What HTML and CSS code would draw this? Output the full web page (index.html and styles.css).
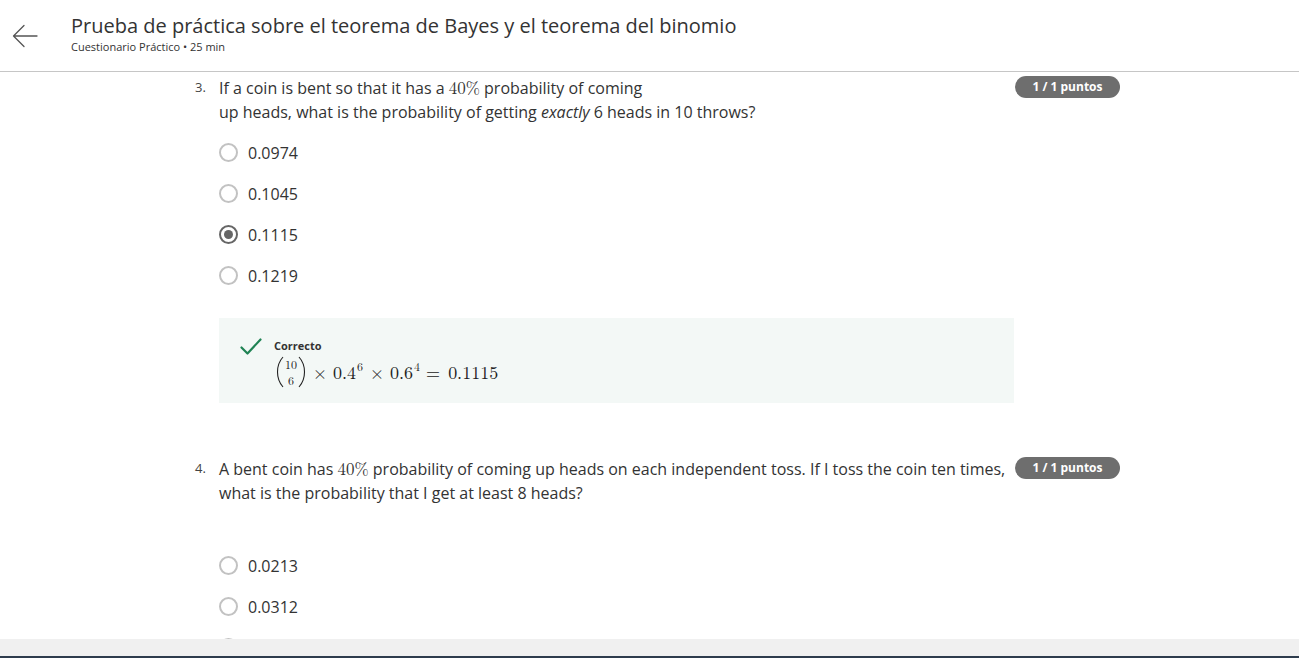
FILE: index.html
```html
<!DOCTYPE html>
<html lang="es">
<head>
<meta charset="utf-8">
<title>Prueba de práctica</title>
<link rel="stylesheet" href="styles.css">
</head>
<body>
<header class="topbar">
  <button class="back" aria-label="Atrás">
    <svg width="26" height="24" viewBox="0 0 26 24" fill="none" stroke="#555" stroke-width="1.3" stroke-linecap="round" stroke-linejoin="round"><path d="M25 12H1.5M12 1.5L1.5 12L12 22.5"/></svg>
  </button>
  <div class="titles">
    <h1 class="title">Prueba de práctica sobre el teorema de Bayes y el teorema del binomio</h1>
    <div class="subtitle">Cuestionario Práctico • 25 min</div>
  </div>
</header>

<main class="content">
  <section class="question">
    <div class="qrow">
      <span class="qnum">3.</span>
      <p class="qtext">If a coin is bent so that it has a <span class="m">40%</span> probability of coming<br>up heads, what is the probability of getting <em>exactly</em> 6 heads in 10 throws?</p>
      <span class="badge">1 / 1 puntos</span>
    </div>
    <ul class="options">
      <li class="opt"><span class="radio"></span>0.0974</li>
      <li class="opt"><span class="radio"></span>0.1045</li>
      <li class="opt"><span class="radio checked"></span>0.1115</li>
      <li class="opt"><span class="radio"></span>0.1219</li>
    </ul>
    <div class="feedback">
      <svg class="check" width="22" height="18" viewBox="0 0 22 18" fill="none" stroke="#1f8354" stroke-width="2.2" stroke-linecap="round" stroke-linejoin="round"><path d="M1.5 9.5L7.5 15.5L20.5 1.5"/></svg>
      <div class="fbody">
        <div class="fhead">Correcto</div>
        <div class="formula">
          <span class="binom">
            <svg class="paren" width="8" height="32" viewBox="0 0 8 32" fill="none" stroke="#222" stroke-width="1.1"><path d="M7 1C2.5 6 1.5 11 1.5 16S2.5 26 7 31"/></svg>
            <span class="stack"><span>10</span><span>6</span></span>
            <svg class="paren" width="8" height="32" viewBox="0 0 8 32" fill="none" stroke="#222" stroke-width="1.1"><path d="M1 1C5.5 6 6.5 11 6.5 16S5.5 26 1 31"/></svg>
          </span><span class="op">×</span><span>0.4</span><span class="sup">6</span><span class="op">×</span><span>0.6</span><span class="sup">4</span><span class="op eq">=</span><span>0.1115</span>
        </div>
      </div>
    </div>
  </section>

  <section class="question q4">
    <div class="qrow">
      <span class="qnum">4.</span>
      <p class="qtext">A bent coin has <span class="m">40%</span> probability of coming up heads on each independent toss. If I toss the coin ten times,<br>what is the probability that I get at least 8 heads?</p>
      <span class="badge">1 / 1 puntos</span>
    </div>
    <ul class="options spaced">
      <li class="opt"><span class="radio"></span>0.0213</li>
      <li class="opt"><span class="radio"></span>0.0312</li>
      <li class="opt"><span class="radio"></span>0.0548</li>
    </ul>
  </section>
</main>

<footer class="bottombar">
  <div class="taskline"></div>
</footer>
</body>
</html>
```

FILE: styles.css
```css
* { box-sizing: border-box; }
html, body { margin: 0; padding: 0; }
body {
  font-family: "Open Sans", "Noto Sans", sans-serif;
  color: #333;
  background: #fff;
  overflow: hidden;
  height: 658px;
}
.topbar {
  height: 72px;
  border-bottom: 1px solid #c6c6c6;
  display: flex;
  align-items: flex-start;
}
.back {
  border: 0;
  background: none;
  padding: 0;
  margin: 24px 0 0 12px;
  width: 26px;
  height: 24px;
  display: flex;
}
.titles { margin-left: 33px; padding-top: 12px; }
.title {
  margin: 0;
  font-size: 20px;
  line-height: 27px;
  font-weight: 400;
  color: #333;
}
.subtitle {
  font-size: 11px;
  line-height: 16px;
  color: #333;
}
.content { padding-top: 3px; }
.question { margin-left: 195px; width: 925px; }
.qrow { display: flex; align-items: flex-start; }
.qnum {
  width: 24px;
  font-size: 13px;
  line-height: 24px;
  color: #444;
  flex: none;
}
.qtext {
  margin: 0;
  font-size: 16px;
  line-height: 24px;
  width: 796px;
  flex: none;
  color: #333;
  white-space: nowrap;
}
.qtext em { font-style: italic; }
.m {
  font-family: "Latin Modern Roman", "DejaVu Serif", serif;
  font-size: 17px;
}
.badge {
  margin-top: 1px;
  width: 105px;
  height: 22px;
  border-radius: 11px;
  background: #6e6e6e;
  color: #fff;
  font-size: 12px;
  font-weight: 700;
  text-align: center;
  line-height: 22px;
  flex: none;
}
.options {
  list-style: none;
  margin: 8px 0 0 24px;
  padding: 0;
}
.options.spaced { margin-top: 40px; }
.opt {
  height: 41px;
  display: flex;
  align-items: center;
  font-size: 16px;
  color: #333;
}
.radio {
  width: 19px;
  height: 19px;
  border: 2px solid #c2c2c2;
  border-radius: 50%;
  margin-right: 10px;
  flex: none;
  display: flex;
  align-items: center;
  justify-content: center;
}
.radio.checked { border: 2px solid #666; }
.radio.checked::after {
  content: "";
  width: 9px;
  height: 9px;
  border-radius: 50%;
  background: #666;
}
.feedback {
  margin: 22px 0 0 24px;
  width: 795px;
  height: 85px;
  background: #f3f8f6;
  display: flex;
  align-items: flex-start;
  padding: 20px 0 0 21px;
}
.check { flex: none; }
.fbody { margin-left: 12px; }
.fhead {
  font-size: 11px;
  font-weight: 700;
  line-height: 16px;
  color: #333;
}
.formula {
  font-family: "Latin Modern Roman", "DejaVu Serif", serif;
  font-size: 18px;
  line-height: 34px;
  color: #222;
  display: flex;
  align-items: center;
  margin-left: 2px;
  margin-top: 1px;
}
.sup {
  font-size: 12px;
  line-height: 12px;
  align-self: flex-start;
  margin-top: 5px;
  margin-left: 1px;
}
.op { margin: 0 6px 0 7px; }
.op.eq { margin: 0 8px 0 6px; }
.binom { display: inline-flex; align-items: center; gap: 1px; }
.paren { display: block; flex: none; }
.stack {
  display: inline-flex;
  flex-direction: column;
  align-items: center;
  font-size: 12px;
  line-height: 16px;
}
.q4 { margin-top: 53px; }
.bottombar {
  position: fixed;
  left: 0;
  right: 0;
  bottom: 0;
  height: 19px;
  background: #f0f0f0;
}
.taskline {
  position: absolute;
  left: 0;
  right: 0;
  bottom: 0;
  height: 2px;
  background: #2e3c4d;
}
```
